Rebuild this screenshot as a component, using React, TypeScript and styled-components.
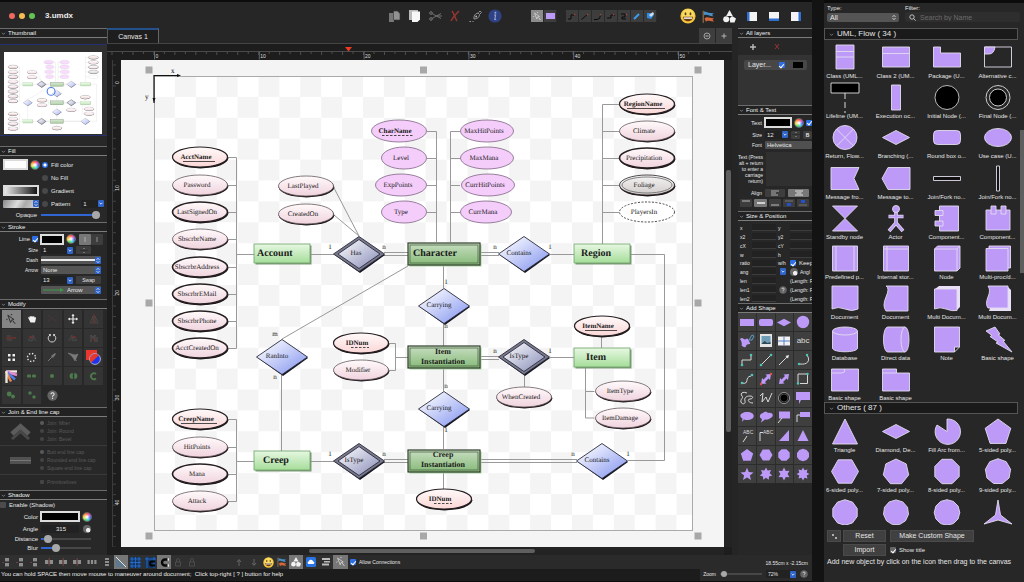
import React from "react";
import styled, { createGlobalStyle, css } from "styled-components";

const SANS = `"Liberation Sans", Inter, sans-serif`;
const SERIF = `"Liberation Serif", serif`;
const PURPLE = "#bd9af8";
const EDGE = "#e2dcec";

const GlobalStyle = createGlobalStyle`
  * { box-sizing: border-box; }
  body { margin: 0; background: #0e0e0e; color: #e6e6e6; font-family: ${SANS}; font-size: 6px; line-height: 8px; }
  button, input, select, textarea { font: inherit; color: inherit; margin: 0; padding: 0; border: 0; background: none; border-radius: 0; }
  svg { display: block; flex: none; }
`;

/* ---------- frame ---------- */
const Desktop = styled.div`
  display: flex;
  gap: 12px;
  height: 100vh;
  overflow: hidden;
  background: #131313;
`;
const AppWindow = styled.main`
  flex: 1;
  min-width: 0;
  display: flex;
  flex-direction: column;
  background: #252525;
  border-top: 2px solid #0c0c0c;
  border-bottom: 1px solid #0c0c0c;
`;
const TitleBar = styled.header`
  display: flex;
  align-items: center;
  height: 26px;
  flex: none;
  padding: 2px 5px 0 9px;
  background: #262626;
`;
const Lights = styled.div`
  display: flex;
  gap: 4px;
`;
const Light = styled.i<{ $c: string }>`
  width: 6px;
  height: 6px;
  border-radius: 50%;
  background: ${(p) => p.$c};
`;
const FileName = styled.h1`
  margin: 0 auto 0 10px;
  font-size: 8px;
  font-weight: 700;
  color: #ececec;
`;
const IconGroup = styled.div<{ $ml?: number }>`
  display: flex;
  align-items: center;
  margin-left: ${(p) => p.$ml ?? 0}px;
`;
const IconButton = styled.button<{ $w?: number }>`
  width: ${(p) => p.$w ?? 20}px;
  height: 18px;
  display: flex;
  align-items: center;
  justify-content: center;
`;
const SegButton = styled.button<{ $on?: boolean }>`
  width: 13px;
  height: 12px;
  display: flex;
  align-items: center;
  justify-content: center;
  background: ${(p) => (p.$on ? "#8c8c8c" : "#3d3d3d")};
  border-right: 1px solid #2a2a2a;
`;
const Workspace = styled.div`
  flex: 1;
  min-height: 0;
  display: flex;
`;
const SidePanel = styled.aside`
  width: 107px;
  flex: none;
  overflow: hidden;
  background: #282828;
  display: flex;
  flex-direction: column;
`;
const Inspector = styled.aside`
  width: 74px;
  flex: none;
  margin-left: 6px;
  overflow: hidden;
  background: #272727;
`;
const SectionHead = styled.h2`
  height: 10px;
  flex: none;
  margin: 0;
  padding-left: 1px;
  display: flex;
  align-items: center;
  gap: 2px;
  font-size: 6px;
  font-weight: 400;
  line-height: 8px;
  color: #f0f0f0;
  background: #222;
  border-top: 1px solid #6c6c6c;
  border-bottom: 1px solid #7c7c7c;
`;
const Body = styled.div<{ $h: number; $pad?: string }>`
  min-height: ${(p) => p.$h}px;
  flex: none;
  padding: ${(p) => p.$pad ?? "1px 0 0"};
`;
const Row = styled.div<{ $h?: number; $gap?: number; $pl?: number }>`
  height: ${(p) => p.$h ?? 10}px;
  display: flex;
  align-items: center;
  gap: ${(p) => p.$gap ?? 3}px;
  padding-left: ${(p) => p.$pl ?? 0}px;
  white-space: nowrap;
`;
const FieldName = styled.label<{ $w: number; $small?: boolean; $left?: boolean }>`
  width: ${(p) => p.$w}px;
  flex: none;
  text-align: ${(p) => (p.$left ? "left" : "right")};
  font-size: ${(p) => (p.$small ? 5 : 6)}px;
`;
const ChoiceLabel = styled.label<{ $dim?: boolean; $small?: boolean }>`
  display: flex;
  align-items: center;
  gap: 3px;
  font-size: ${(p) => (p.$dim || p.$small ? 5 : 6)}px;
  color: ${(p) => (p.$dim ? "#5a5a5a" : "inherit")};
`;
const Radio = styled.input.attrs({ type: "radio" })<{ $dim?: boolean }>`
  appearance: none;
  width: 6px;
  height: 6px;
  flex: none;
  border-radius: 50%;
  background: #484848;
  ${(p) => p.$dim && css`width: 4px; height: 4px; background: #444;`}
  &:checked {
    background: ${(p) => (p.$dim ? "#5a5a5a" : "radial-gradient(#fff 0 1px, #2f6fe4 2px)")};
  }
`;
const Check = styled.input.attrs({ type: "checkbox" })`
  appearance: none;
  width: 6px;
  height: 6px;
  flex: none;
  border-radius: 1px;
  background: #4c4c4c;
  display: grid;
  place-items: center;
  &:checked { background: #2f6fe4; }
  &:checked::after {
    content: "";
    width: 2px;
    height: 4px;
    border: solid #fff;
    border-width: 0 1px 1px 0;
    transform: rotate(40deg);
  }
`;
const GreyCheck = styled(Check)`
  &:checked { background: #666; }
`;
const DimCheck = styled(Check)`
  width: 4px;
  height: 4px;
  background: #444;
`;
const Well = styled.button<{ $w: number; $fill: string; $h?: number }>`
  width: ${(p) => p.$w}px;
  height: ${(p) => p.$h ?? 11}px;
  flex: none;
  border: 2px solid #dcdcdc;
  background: ${(p) => p.$fill};
`;
const Wheel = styled.button`
  width: 10px;
  height: 10px;
  flex: none;
  border: 1px solid #6a6a6a;
  border-radius: 50%;
  background: radial-gradient(#fff 0 8%, transparent 60%),
    conic-gradient(#ff4b3a, #c74bd8, #3d6bff, #2ccfe0, #49d64a, #f4e63a, #ff9a2b, #ff4b3a);
`;
const Combo = styled.div<{ $w: number; $tone?: string; $center?: boolean }>`
  width: ${(p) => p.$w}px;
  height: 8px;
  flex: none;
  display: flex;
  align-items: center;
  border-radius: 1px;
  background: ${(p) => p.$tone ?? "#222"};
  & > input, & > select {
    flex: 1;
    min-width: 0;
    width: 0;
    padding-left: 2px;
    appearance: none;
    line-height: 8px;
    height: 8px;
    text-align: ${(p) => (p.$center ? "center" : "left")};
  }
`;
const StepBtn = styled.button<{ $plain?: boolean }>`
  width: 6px;
  height: 7px;
  flex: none;
  border-radius: 1px;
  background: ${(p) => (p.$plain ? "none" : "#2f64c8")};
`;
const SmallButton = styled.button<{ $w: number; $on?: boolean; $h?: number }>`
  width: ${(p) => p.$w}px;
  height: ${(p) => p.$h ?? 8}px;
  flex: none;
  display: flex;
  align-items: center;
  justify-content: center;
  border-radius: 1px;
  font-size: 5px;
  background: ${(p) => (p.$on ? "#777" : "#3d3d3d")};
`;
const Slider = styled.input.attrs({ type: "range" })<{ $w: number; $v: number; $k?: number }>`
  appearance: none;
  width: ${(p) => p.$w}px;
  height: 8px;
  flex: none;
  background: linear-gradient(to right, #2f66d4 ${(p) => p.$v}%, #474747 ${(p) => p.$v}%) center / 100% 2px no-repeat;
  &::-webkit-slider-thumb {
    appearance: none;
    width: ${(p) => p.$k ?? 8}px;
    height: ${(p) => p.$k ?? 8}px;
    border-radius: 50%;
    background: #a8a8a8;
  }
`;
const ThumbFrame = styled.div`
  margin-top: 6px;
  padding: 7px 5px 3px 4px;
  height: 92px;
  border-top: 1px solid #26306e;
  border-bottom: 1px solid #26306e;
  background: #303030;
  & > svg { width: 100%; height: 82px; background: #fff; }
`;
const ToolGrid = styled.div`
  display: grid;
  grid-template-columns: repeat(5, 1fr);
  grid-auto-rows: 18px;
  gap: 1px 2px;
  padding: 1px 4px 0 2px;
`;
const ToolCell = styled.button<{ $on?: boolean; $bare?: boolean }>`
  display: grid;
  place-items: center;
  background: ${(p) => (p.$on ? "#858585" : p.$bare ? "none" : "#343434")};
`;
const JoinRow = styled.div`
  display: flex;
  align-items: center;
  gap: 9px;
  height: 29px;
  padding-left: 10px;
  border-bottom: 1px solid #3a3a3a;
`;
const ChoiceStack = styled.div`
  display: flex;
  flex-direction: column;
`;
const Spacer = styled.span`
  width: 10px;
  flex: none;
  display: grid;
  place-items: center;
`;
const Knob = styled.i`
  width: 8px;
  height: 8px;
  flex: none;
  border-radius: 50%;
  background: radial-gradient(circle at 65% 65%, #eee 0 25%, #666 35%);
`;

/* ---------- document area ---------- */
const DocColumn = styled.section`
  flex: 1;
  min-width: 0;
  display: flex;
  flex-direction: column;
  background: #1c1c1c;
`;
const TabBar = styled.div`
  height: 16px;
  flex: none;
  display: flex;
  justify-content: space-between;
  align-items: stretch;
  background: #262626;
  border-bottom: 1px solid #444;
`;
const Tab = styled.button`
  width: 52px;
  font-size: 7px;
  color: #e6e6e6;
  background: #1e1e1e;
  border-top: 2px solid #24508c;
  border-right: 1px solid #666;
  border-left: 1px solid #555;
`;
const TabTools = styled.div`
  display: flex;
  gap: 1px;
  & > button { width: 16px; display: grid; place-items: center; background: #3e3e3e; }
`;
const DocGrid = styled.div`
  flex: 1;
  min-height: 0;
  display: grid;
  grid-template-columns: 14px 1fr 8px;
  grid-template-rows: 16px 1fr 8px;
`;
const Ruler = styled.div<{ $span?: boolean }>`
  overflow: hidden;
  background: #1d1d1d;
  ${(p) => p.$span && css`grid-column: 1 / -1;`}
`;
const CanvasArea = styled.div`
  overflow: hidden;
  background: #f4f4f4;
`;
const Track = styled.div<{ $side?: boolean }>`
  display: flex;
  background: #232323;
  ${(p) => (p.$side ? css`flex-direction: column; padding: 110px 1px 0 2px;` : css`padding: 2px 0 0 188px;`)}
  & > i {
    ${(p) => (p.$side ? css`height: 262px; width: 5px;` : css`width: 226px; height: 4px;`)}
    border-radius: 2px;
    background: #5f5f5f;
  }
`;

/* ---------- bottom ---------- */
const Footer = styled.footer`
  height: 26px;
  flex: none;
  display: flex;
  justify-content: space-between;
  background: #2a2a2a;
`;
const FooterLeft = styled.div`
  flex: 1;
  display: flex;
  flex-direction: column;
`;
const ToolStrip = styled.div`
  display: flex;
  align-items: center;
  height: 14px;
`;
const StripButton = styled.button<{ $on?: boolean; $w?: number }>`
  width: ${(p) => p.$w ?? 14}px;
  height: 14px;
  display: grid;
  place-items: center;
  background: ${(p) => (p.$on ? "#777" : "#303030")};
`;
const StatusLine = styled.p`
  flex: 1;
  margin: 0;
  padding: 1px 0 0 1px;
  line-height: 8px;
  background: #1c1c1c;
  color: #ececec;
  white-space: pre;
`;
const FooterRight = styled.div`
  width: 112px;
  padding: 4px 4px 0 0;
  display: flex;
  flex-direction: column;
  align-items: flex-end;
  gap: 2px;
  font-size: 5px;
`;

/* ---------- inspector ---------- */
const LayerList = styled.div`
  height: 50px;
  background: #333;
  padding: 5px 5px 0 6px;
`;
const LayerRow = styled.div`
  display: flex;
  align-items: center;
  gap: 8px;
  height: 10px;
  padding: 0 4px;
  border-radius: 2px;
  font-size: 7px;
  background: #474747;
`;
const Swatch = styled.i`
  width: 13px;
  height: 6px;
  background: #000;
`;
const TextNote = styled.label`
  width: 25px;
  flex: none;
  font-size: 5px;
  line-height: 6px;
  text-align: right;
  white-space: normal;
`;
const TextBox = styled.textarea`
  flex: 1;
  min-width: 0;
  height: 34px;
  resize: none;
  background: #303030;
`;
const NumField = styled.input`
  width: 24px;
  height: 7px;
  flex: none;
  background: #222;
  border-bottom: 1px solid #3c3c3c;
`;
const ShapeGrid = styled.div`
  display: grid;
  grid-template-columns: repeat(4, 1fr);
  grid-auto-rows: 18px;
  gap: 1px 1px;
  background: #2c2c2c;
  & > button { display: grid; place-items: center; background: #3f3f3f; font-size: 8px; color: #ddd; }
`;

/* ---------- palette ---------- */
const Palette = styled.aside`
  width: 200px;
  flex: none;
  display: flex;
  flex-direction: column;
  border-top: 3px solid #0c0c0c;
  background: #272727;
`;
const FilterBar = styled.div`
  display: flex;
  gap: 6px;
  padding: 1px 4px 6px 3px;
`;
const FilterField = styled.div<{ $grow?: boolean }>`
  flex: ${(p) => (p.$grow ? "1" : "none")};
  ${(p) => !p.$grow && css`width: 72px;`}
  min-width: 0;
  display: flex;
  flex-direction: column;
`;
const Picker = styled.div`
  height: 9px;
  margin-top: 1px;
  display: flex;
  align-items: center;
  border-radius: 2px;
  background: #555;
  padding-right: 2px;
  & > select { flex: 1; min-width: 0; appearance: none; padding-left: 3px; font-size: 7px; line-height: 9px; height: 9px; }
`;
const Search = styled.div`
  height: 10px;
  display: flex;
  align-items: center;
  gap: 4px;
  padding-left: 4px;
  border-radius: 2px;
  background: #2e2e2e;
  & > input { flex: 1; min-width: 0; font-size: 7px; height: 10px; }
  & > input::placeholder { color: #6c6c6c; }
`;
const ScrollArea = styled.div`
  flex: 1;
  min-height: 0;
  display: flex;
  justify-content: space-between;
  overflow: hidden;
`;
const Groups = styled.div`
  width: 194px;
`;
const GroupHead = styled.h2`
  height: 12px;
  margin: 0;
  padding-left: 4px;
  display: flex;
  align-items: center;
  gap: 3px;
  font-size: 8px;
  font-weight: 400;
  line-height: 10px;
  background: #1a1a1a;
  border: 1px solid #555;
`;
const TileGrid = styled.div<{ $h: number }>`
  display: grid;
  grid-template-columns: repeat(4, 51px);
  grid-auto-rows: 1fr;
  min-height: ${(p) => p.$h}px;
  margin-left: -5px;
`;
const Tile = styled.button`
  display: flex;
  flex-direction: column;
  align-items: center;
  justify-content: flex-start;
  padding-top: 3px;
  gap: 1px;
  line-height: 7px;
  white-space: nowrap;
`;
const Thumb = styled.i`
  width: 4px;
  height: 143px;
  margin-top: 102px;
  background: #5e5e5e;
`;
const PaletteFoot = styled.div`
  display: grid;
  grid-template-columns: 14px 43px 1fr;
  gap: 2px;
  padding: 5px 3px 0 3px;
  height: 57px;
  grid-template-rows: 12px 12px 8px;
`;
const PushButton = styled.button<{ $w?: number }>`
  width: ${(p) => (p.$w ? p.$w + "px" : "100%")};
  height: 12px;
  font-size: 7px;
  background: #404040;
  border: 1px solid #4a4a4a;
  display: grid;
  place-items: center;
`;
const FootCell = styled.div`
  display: flex;
  align-items: center;
  padding-left: 2px;
`;
const FootLine = styled.p`
  grid-column: 1 / -1;
  margin: 0;
  font-size: 7px;
  line-height: 8px;
  white-space: nowrap;
`;

/* ---------- small drawings ---------- */
const Chevron = () => (
  <svg width="5" height="5" viewBox="0 0 5 5"><path d="M1 1.8 2.5 3.4 4 1.8" fill="none" stroke="#999" strokeWidth=".7" /></svg>
);
const Head = ({ children }: { children: React.ReactNode }) => (
  <SectionHead><Chevron />{children}</SectionHead>
);
const UpDown = ({ plain }: { plain?: boolean }) => (
  <StepBtn as="span" $plain={plain}>
    <svg width="6" height="7" viewBox="0 0 6 7"><path d="M1.6 2.8 3 1.4l1.4 1.4M1.6 4.2 3 5.6l1.4-1.4" fill="none" stroke="#fff" strokeWidth=".8" /></svg>
  </StepBtn>
);
const DownBtn = ({ label }: { label: string }) => (
  <StepBtn aria-label={label}>
    <svg width="6" height="7" viewBox="0 0 6 7"><path d="M1.6 2.8 3 4.2l1.4-1.4" fill="none" stroke="#fff" strokeWidth=".8" /></svg>
  </StepBtn>
);
const StepPair = () => (
  <svg width="8" height="7" viewBox="0 0 8 7"><path d="M3 2 4 1l1 1M3 5l1 1 1-1" fill="none" stroke="#888" strokeWidth=".7" /><path d="M0 3.500h8" stroke="#2a2a2a" strokeWidth=".8" /></svg>
);
const Smiley = ({ s }: { s: number }) => (
  <svg width={s} height={s} viewBox="0 0 16 16">
    <circle cx="8" cy="8" r="7.6" fill="#f5c63c" />
    <circle cx="8" cy="7" r="6" fill="#fadb62" />
    <ellipse cx="5.5" cy="5.8" rx=".9" ry="1.5" fill="#5b3a12" /><ellipse cx="10.5" cy="5.8" rx=".9" ry="1.5" fill="#5b3a12" />
    <path d="M3 8.8h10c0 6-10 6-10 0z" fill="#6b3c12" /><path d="M3.8 9.4h8.4v1.4H3.8z" fill="#fff" />
  </svg>
);
const Flags = ({ s }: { s: number }) => (
  <svg width={s} height={s} viewBox="0 0 13 13">
    <path d="M1.2.8v12" stroke="#a08256" strokeWidth="1" />
    <path d="M2 1.500c3 0 4 2 7 1.500l3 .5-2 1.200 1.500 1.500C7 6.500 6 3.600 2 5.200z" fill="#4a90c8" />
    <path d="M2.500 8.400C5 5.800 7 8 12 8.200l-1.500 1.200 1.500 2C7 11.600 6 9.600 4 12z" fill="#d3663a" />
  </svg>
);
const Shapes = ({ s }: { s: number }) => (
  <svg width={s} height={s} viewBox="0 0 13 13" fill="#f2f2f2">
    <path d="M6.500 0 9.800 6h-6.600z" /><circle cx="3.200" cy="9.300" r="3" /><path d="m9 6 4 2.600-1.500 3.800H7.200L6.600 8.400z" />
  </svg>
);
const Cursor = ({ s = 9, c = "#ddd" }: { s?: number; c?: string }) => (
  <svg width={s} height={s} viewBox="0 0 9 9"><path d="m1.500 1 5 3.500-2 .5L3.800 7z" fill="none" stroke={c} strokeWidth=".7" /><path d="m5.500 5.500 2 2.500M1 4l-.5 1M4 .5h1" stroke={c} strokeWidth=".8" /></svg>
);
const WindowIcon = ({ side }: { side: "l" | "b" | "r" }) => (
  <svg width="10" height="9" viewBox="0 0 10 9">
    <path d="M0 0h10v9H0z" fill="#f4f4f4" />
    {side === "l" && <path d="M0 0h2.500v9H0z" fill="#2f6fd0" />}
    {side === "b" && <path d="M0 6.500h10V9H0z" fill="#2f6fd0" />}
    {side === "r" && <path d="M7.500 0H10v9H7.500z" fill="#2f6fd0" />}
  </svg>
);
const Connector = ({ d, blue }: { d: string; blue?: boolean }) => (
  <svg width="10" height="9" viewBox="0 0 10 9" fill="none">
    <path d={d} stroke={blue ? "#3b9cf0" : "#0b0b0b"} strokeWidth={blue ? 2 : 1} />
    {!blue && <circle cx="7.600" cy="2.600" r=".8" fill="#a8483c" />}
  </svg>
);
const QMark = ({ s }: { s: number }) => (
  <svg width={s} height={s} viewBox="0 0 12 12">
    <circle cx="6" cy="6" r="5.600" fill="#636363" />
    <path d="M4.300 4.600c0-2.200 3.500-2.200 3.500 0C7.800 6 6 5.800 6 7.300" fill="none" stroke="#eee" strokeWidth="1.100" /><circle cx="6" cy="9" r=".7" fill="#eee" />
  </svg>
);

/* ---------- ER diagram ---------- */
type Kind = "thin" | "mid" | "thick" | "double" | "dash" | "pink";
type Attr = [string, number, number, Kind, number?];
const attrs: Attr[] = [
  ["AcctName", 200, 157, "mid"], ["Password", 200, 185, "thin"], ["LastSignedOn", 200, 212, "thick"],
  ["SbscrbrName", 200, 239, "thin"], ["SbscrbrAddress", 200, 267, "thick"], ["SbscrbrEMail", 200, 294, "thick"],
  ["SbscrbrPhone", 200, 321, "thick"], ["AcctCreatedOn", 200, 348, "thick"],
  ["CreepName", 200, 419, "mid"], ["HitPoints", 200, 447, "thin"], ["Mana", 200, 474, "thick"], ["Attack", 200, 501, "thin"],
  ["LastPlayed", 306, 186, "thin"], ["CreatedOn", 306, 214, "thin"],
  ["CharName", 399, 131, "pink", 28], ["Level", 404, 158, "pink", 23], ["ExpPoints", 401, 185, "pink", 26], ["Type", 404, 212, "pink", 23],
  ["MaxHitPoints", 487, 131, "pink", 27], ["MaxMana", 487, 158, "pink", 27], ["CurrHitPoints", 488, 185, "pink", 27], ["CurrMana", 486, 212, "pink", 26],
  ["RegionName", 647, 104, "mid"], ["Climate", 647, 131, "thin"], ["Precipitation", 647, 158, "thick"], ["Foliage", 647, 185, "double"], ["PlayersIn", 647, 212, "dash"],
  ["IDNum", 361, 343, "mid"], ["Modifier", 361, 370, "thin"], ["WhenCreated", 524, 397, "thin"],
  ["ItemName", 602, 326, "mid"], ["ItemType", 623, 391, "thin"], ["ItemDamage", 623, 418, "thin"], ["IDNum", 444, 499, "mid"],
];
const dashedKeys = ["IDNum", "CharName"];
const keys: Record<string, number> = { AcctName: 17, CreepName: 19, RegionName: 20, ItemName: 17, IDNum: 10, CharName: 17 };
const rels: [string, number, number, boolean][] = [
  ["Has", 359, 254, true], ["Contains", 524, 254, false], ["Carrying", 444, 306, false], ["RanInto", 282, 357, false],
  ["IsType", 524, 357, true], ["Carrying", 444, 409, false], ["IsType", 359, 461, true], ["Contains", 602, 461, false],
];
const cards: [string, number, number][] = [
  ["1", 330, 249], ["n", 384, 249], ["n", 495, 249], ["1", 550, 249], ["1", 446, 284], ["n", 446, 328], ["m", 275, 336], ["n", 275, 379],
  ["n", 446, 388], ["1", 446, 432], ["n", 495, 353], ["1", 550, 353], ["1", 330, 456], ["n", 384, 456], ["n", 573, 456], ["1", 628, 456],
];
const wires = [
  "M228 157.500h8.500v191h-8.500M228 185.500h8.500M228 212.500h8.500M228 239.500h8.500M228 267.500h8.500M228 294.500h8.500M228 321.500h8.500M236 254.500h18",
  "M228 419.500h8.500v82h-8.500M228 447.500h8.500M228 474.500h8.500M236 461.500h18",
  "M334 188 359 236M334 215l25 21M310 254.500h24M384 252.500h24M384 255.500h24M480 252.500h19M480 255.500h19M550 254.500h24",
  "M427 131.500h9.500V242M427 158.500h9.500M427 185.500h9.500M427 212.500h9.500M460 131.500h-9.500V242M460 158.500h-9.500M460 185.500h-9.500M460 212.500h-9.500",
  "M619 104.500h-16.500V244M619 131.500h-16.500M619 158.500h-16.500M619 185.500h-16.500M619 212.500h-16.500",
  "M630 254.500h34.500v206H628M408 266 282 339M281.500 375v76M443.500 265v23M443.500 324v22M443.500 369v22M443.500 427v22M443.500 472v17",
  "M389 343.500h6.500v27H389M395 357.500h13M480 356.500h19M480 359.500h19M550 357.500h24M524.500 375v12M601.500 336v12M585.500 367v51h9M585.500 391.500h9",
  "M310 461.500h24M384 459.500h24M384 462.500h24M480 459.500h97M480 462.500h97",
];
const Entity = ({ x, y, w, h, dark }: { x: number; y: number; w: number; h: number; dark?: boolean }) => (
  <g>
    <rect x={x + 1.500} y={y + 1.500} width={w} height={h} fill={dark ? "#a9cfa0" : "#7d9a78"} />
    <rect x={x} y={y} width={w} height={h} fill={dark ? "url(#gDark)" : "url(#gGreen)"} stroke={dark ? "#33402f" : "#6ca166"} strokeWidth={dark ? 1.2 : 0.8} />
    {dark && <rect x={x + 2} y={y + 2} width={w - 4} height={h - 4} fill="none" stroke="#4d6646" strokeWidth=".8" />}
  </g>
);
const Diagram = ({ text = true }: { text?: boolean }) => (
  <g fontFamily={SERIF} fontSize="7" fill="#1a1a1a" textRendering="geometricPrecision">
    <defs>
      <linearGradient id="gRose" x1="0" y1="0" x2="0" y2="1"><stop offset="0" stopColor="#fffafa" /><stop offset="1" stopColor="#f0d3de" /></linearGradient>
      <linearGradient id="gKey" x1="0" y1="0" x2="0" y2="1"><stop offset="0" stopColor="#fffafa" /><stop offset="1" stopColor="#fbd6d6" /></linearGradient>
      <linearGradient id="gGrey" x1="0" y1="0" x2="0" y2="1"><stop offset="0" stopColor="#f5f3f3" /><stop offset="1" stopColor="#d2cccc" /></linearGradient>
      <linearGradient id="gGreen" x1="0" y1="0" x2="0" y2="1"><stop offset="0" stopColor="#e6f8e2" /><stop offset="1" stopColor="#a6dd9a" /></linearGradient>
      <linearGradient id="gDark" x1="0" y1="0" x2="0" y2="1"><stop offset="0" stopColor="#c8dec2" /><stop offset="1" stopColor="#86ba78" /></linearGradient>
      <linearGradient id="gBlue" x1="0" y1="0" x2="1" y2="1"><stop offset=".2" stopColor="#eceffd" /><stop offset=".9" stopColor="#8c9cf0" /></linearGradient>
      <linearGradient id="gSlate" x1="0" y1="0" x2="1" y2="1"><stop offset=".2" stopColor="#e8e8f2" /><stop offset=".9" stopColor="#9298bd" /></linearGradient>
    </defs>
    {wires.map((d) => <path key={d} d={d} fill="none" stroke="#999" strokeWidth="1" />)}
    {attrs.map(([n, x, y, k, rx = 28]) => (
      <g key={n + x + y}>
        {(k === "thin" || k === "mid" || k === "thick" || k === "double") && <ellipse cx={x + 0.5} cy={y + 1.2} rx={rx - 0.2} ry="10.200" fill="#1c1418" />}
        <ellipse cx={x} cy={y} rx={rx - 0.5} ry={k === "pink" ? 11 : 10}
          fill={k === "pink" ? "#f5cdfb" : k === "dash" ? "#fff" : k === "double" ? "url(#gGrey)" : k === "mid" ? "url(#gKey)" : "url(#gRose)"}
          stroke={k === "pink" ? "#7d6683" : k === "thin" ? "#665a5f" : "#262022"}
          strokeWidth={k === "thick" ? 1.6 : k === "mid" ? 1.2 : 0.8}
          strokeDasharray={k === "dash" ? "2 1.500" : undefined} />
        {k === "double" && <ellipse cx={x} cy={y} rx="25" ry="8" fill="none" stroke="#666" strokeWidth=".8" />}
        {text && (
          <text x={x - (keys[n] ? 4 : 3)} y={y + 2} textAnchor="middle" fontWeight={keys[n] ? 700 : 400}>{n}</text>
        )}
        {keys[n] && <path d={`M${x - keys[n]} ${y + 4.500}h${keys[n] * 2 - 2}`} stroke="#222" strokeWidth=".8" strokeDasharray={dashedKeys.includes(n) ? "2.500 1.500" : undefined} />}
      </g>
    ))}
    <Entity x={254} y={244} w={56} h={19} /><Entity x={574} y={244} w={56} h={19} />
    <Entity x={574} y={348} w={56} h={19} /><Entity x={254} y={451} w={56} h={19} />
    <Entity x={408} y={243} w={72} h={22} dark /><Entity x={408} y={346} w={72} h={22} dark /><Entity x={408} y={450} w={72} h={22} dark />
    {rels.map(([n, x, y, dbl]) => (
      <g key={n + x + y}>
        <path d={`M${x + 1} ${y - 16}l25 17-25 18-25-18z`} fill="#15151f" />
        <path d={`M${x} ${y - 17.500}l25.500 17.500-25.500 17.500-25.500-17.500z`} fill={dbl ? "#77788a" : "url(#gBlue)"} stroke="#2b2b3c" strokeWidth=".9" />
        {dbl && <path d={`M${x} ${y - 14.500}l21 14.500-21 14.500-21-14.500z`} fill="url(#gSlate)" stroke="#2b2b3c" strokeWidth=".9" />}
        {text && <text x={x - (n === "Has" ? 3 : 5)} y={y + 1} textAnchor="middle">{n}</text>}
      </g>
    ))}
    {text && (
      <g>
        {cards.map(([t, x, y]) => <text key={t + x + y} x={x} y={y} textAnchor="middle">{t}</text>)}
        <g fontWeight="700" fontSize="10">
          <text x="257" y="256">Account</text><text x="413" y="256">Character</text><text x="581" y="256">Region</text>
          <text x="586" y="360">Item</text><text x="263" y="463">Creep</text>
        </g>
        <g fontWeight="700" fontSize="8" textAnchor="middle">
          <text x="443" y="354">Item</text><text x="443" y="364">Instantiation</text>
          <text x="443" y="457">Creep</text><text x="443" y="467">Instantiation</text>
        </g>
      </g>
    )}
  </g>
);
const CanvasDrawing = () => (
  <svg width="100%" height="100%" role="img" aria-label="Entity relationship diagram">
    <defs>
      <pattern id="checker" x="154" y="76" width="41.800" height="41.800" patternUnits="userSpaceOnUse">
        <path d="M0 0h41.800v41.800H0z" fill="#fff" /><path d="M20.900 0h20.900v20.900H20.900zM0 20.900h20.900v20.900H0z" fill="#f4f4f4" />
      </pattern>
    </defs>
    <g transform="translate(-121 -60)">
      <rect x="154.500" y="76.500" width="538" height="454" fill="url(#checker)" stroke="#aaa" />
      {[70, 303, 536].flatMap((y) => [149, 423.500, 698].map((x) => (x === 423.500 && y === 303 ? null : <rect key={x + "-" + y} x={x - 3.500} y={y - 3.500} width="7" height="7" fill="#a8a8a8" />)))}
      <path d="M154 103V75.500h25M154 75.500v24" fill="none" stroke="#111" strokeWidth="1.200" />
      <path d="m177 74 4 1.500-4 1.500zM152.500 98l1.500 4 1.500-4z" fill="#111" />
      <g fontSize="7" fontFamily={SERIF} textRendering="geometricPrecision"><text x="171" y="73">x</text><text x="145" y="99">y</text></g>
      <Diagram />
    </g>
  </svg>
);
const steps = (n: number) => Array.from({ length: n }, (_, i) => i);
const TopRuler = () => (
  <svg width="100%" height="16">
    <path d="M0 7.500H3000" stroke="#4a4a4a" />
    {steps(58).map((i) => <path key={i} d={`M${5 + i * 10.48} 8v${i % 2 ? 2 : 3}`} stroke="#5c5c5c" strokeWidth=".8" />)}
    {steps(6).map((i) => <path key={"m" + i} d={`M${47.5 + i * 104.8} 7.500v8`} stroke="#777" strokeWidth=".8" />)}
    {steps(6).map((i) => <text key={"t" + i} x={48.5 + i * 104.8} y="14" fontSize="5" fill="#ddd">{i * 10}</text>)}
    <path d="M238 3h7l-3.500 4.500z" fill="#ee3a22" />
  </svg>
);
const SideRuler = () => (
  <svg width="14" height="100%">
    <path d="M5.500 0V2000" stroke="#3c3c3c" />
    {steps(47).map((i) => <path key={i} d={`M6 ${5 + i * 10.48}h3`} stroke="#4c4c4c" strokeWidth=".8" />)}
    {steps(5).map((i) => <text key={i} transform={`translate(12 ${(i ? 22 : 20) + i * 104.8 + 4}) rotate(-90)`} fontSize="5" fill="#ddd">{i * 10}</text>)}
  </svg>
);

/* ---------- modify tools ---------- */
const modifyTools: [string, React.ReactNode][] = [
  ["Select", <Cursor key="i" s={11} c="#222" />],
  ["Pan", <svg key="i" width="10" height="10" viewBox="0 0 10 10"><path d="M1 3.500c1-.8 1.400.2 1.700.7C2 1.600 3.600 1.400 4 3c.2-1.400 1.700-1.400 1.800 0 .6-1.200 1.800-.8 1.700.5.800-.8 1.700-.2 1.500.8L8 8.500H3.500z" fill="#f2f2f2" /></svg>],
  ["Cut path", <svg key="i" width="11" height="10" viewBox="0 0 11 10"><path d="m1 1 9 7M1 8l3-3M8 2l2-1" stroke="#4a3636" fill="none" /></svg>],
  ["Move", <svg key="i" width="10" height="10" viewBox="0 0 10 10"><path d="M5 .5v9M.5 5h9" stroke="#e8e8e8" strokeWidth="1.200" /><path d="M3.400 2 5 0l1.600 2zM3.400 8 5 10l1.600-2zM2 3.400 0 5l2 1.600zM8 3.400 10 5 8 6.600z" fill="#e8e8e8" /></svg>],
  ["Flip horizontal", <svg key="i" width="10" height="10" viewBox="0 0 10 10"><path d="M1 9 4 2v7zM9 9 6 2v7z" fill="none" stroke="#4c4c4c" strokeWidth=".8" /><path d="M5 0v10" stroke="#8a302b" strokeWidth=".8" /></svg>],
  ["Flip vertical", <svg key="i" width="10" height="10" viewBox="0 0 10 10"><path d="M1 3h4M1 7h5" stroke="#4c4c4c" /><path d="M0 5h10" stroke="#8a302b" /></svg>],
  ["Rotate left", <svg key="i" width="10" height="10" viewBox="0 0 10 10"><path d="m1 7 4-3v4zM6 8V2l3 6" fill="none" stroke="#4c4c4c" strokeWidth=".8" /><path d="M2 4h4" stroke="#8a302b" /></svg>],
  ["Rotate", <svg key="i" width="10" height="10" viewBox="0 0 10 10"><path d="M3 2a3.800 3.800 0 1 0 4 0" fill="none" stroke="#d0d0d0" /><path d="M1.500 1h2.400v2.400zM8.500 1H6.100v2.400z" fill="#d0d0d0" /></svg>],
  ["Rotate right", <svg key="i" width="10" height="10" viewBox="0 0 10 10"><path d="m9 7-4-3v4zM4 8V2L1 8" fill="none" stroke="#4c4c4c" strokeWidth=".8" /><path d="M4 4h4" stroke="#8a302b" /></svg>],
  ["Skew", <svg key="i" width="10" height="10" viewBox="0 0 10 10"><path d="M2 9V2l2 3 2-3v7M8 4v5" fill="none" stroke="#555" strokeWidth=".9" /><path d="m4 5 2 3" stroke="#8a302b" /></svg>],
  ["Grid array", <svg key="i" width="9" height="9" viewBox="0 0 9 9" fill="#f0f0f0"><path d="M1 1h2.500v2.500H1zM5.500 1H8v2.500H5.500zM1 5.500h2.500V8H1zM5.500 5.500H8V8H5.500z" /></svg>],
  ["Circular array", <svg key="i" width="11" height="11" viewBox="0 0 11 11"><circle cx="5.500" cy="5.500" r="4" fill="none" stroke="#e8e8e8" strokeWidth="1.400" strokeDasharray="1.400 1.740" /></svg>],
  ["Dropper", <svg key="i" width="10" height="10" viewBox="0 0 10 10"><path d="m1 9 4-4" stroke="#777" /><path d="m4 4 2 2 3-4-1-1z" fill="#777" /></svg>],
  ["Paste style", <svg key="i" width="11" height="10" viewBox="0 0 11 10"><path d="m0 1 7 2-2 2zM4 4l6-2-3 7zM6 6l3 3" fill="#7a7a7a" stroke="#7a7a7a" strokeWidth=".6" /></svg>],
  ["Colors", <svg key="i" width="15" height="15" viewBox="0 0 15 15"><path d="M0 0h11v10H0z" fill="#e8372c" /><circle cx="9" cy="9" r="5.400" fill="#1e35ec" stroke="#c9c9dd" strokeWidth=".8" /><path d="M5.200 12.800A5.400 5.400 0 0 1 12.800 5.200z" fill="#e8372c" /></svg>],
  ["Palette", <svg key="i" width="13" height="13" viewBox="0 0 13 13" fill="none" strokeWidth="2.400"><path d="M1 1.500h11" stroke="#f2e6e2" /><path d="m1 1.500 11 3.500" stroke="#e58bd0" /><path d="m1 1.500 9 8" stroke="#4f7df0" /><path d="m1 1.500 5 10" stroke="#ee8a44" /><path d="M1.500 1v12" stroke="#e8e4da" /></svg>],
  ["Union", <svg key="i" width="11" height="10" viewBox="0 0 11 10" fill="#4d7a4b"><rect x="1" y="3.500" width="4" height="3" rx="1" /><rect x="6" y="3.500" width="4" height="3" rx="1" /></svg>],
  ["Intersect", <svg key="i" width="10" height="10" viewBox="0 0 10 10"><circle cx="5" cy="5" r="2" fill="#4d7a4b" /></svg>],
  ["Exclude", <svg key="i" width="11" height="10" viewBox="0 0 11 10" fill="#4d7a4b"><path d="M4.800 2v6a3.200 3 0 0 1 0-6zM6.200 2v6a3.200 3 0 0 0 0-6z" /></svg>],
  ["Subtract", <svg key="i" width="10" height="10" viewBox="0 0 10 10"><path d="M7 3a3 3 0 1 0 0 4.500" fill="none" stroke="#4d7a4b" strokeWidth="1.800" /></svg>],
  ["Group", <svg key="i" width="10" height="10" viewBox="0 0 10 10" fill="#4d7a4b"><circle cx="3.200" cy="4" r="2.400" /><circle cx="7" cy="6.500" r="2" /></svg>],
  ["Ungroup", <svg key="i" width="10" height="10" viewBox="0 0 10 10" fill="#4d7a4b"><circle cx="3" cy="3" r="1.700" /><circle cx="7" cy="7" r="1.700" /></svg>],
  ["Help", <QMark key="i" s={11} />],
];

/* ---------- inspector shapes ---------- */
const poly = (n: number, cx: number, cy: number, r: number, rot = -90) =>
  steps(n).map((i) => { const a = ((rot + (360 / n) * i) * Math.PI) / 180; return `${(cx + r * Math.cos(a)).toFixed(1)},${(cy + r * Math.sin(a)).toFixed(1)}`; }).join(" ");
const star = (n: number, cx: number, cy: number, r: number, r2: number) =>
  steps(n * 2).map((i) => { const a = ((-90 + (180 / n) * i) * Math.PI) / 180; const q = i % 2 ? r2 : r; return `${(cx + q * Math.cos(a)).toFixed(1)},${(cy + q * Math.sin(a)).toFixed(1)}`; }).join(" ");
const P = { fill: PURPLE };
const L = { fill: "none", stroke: "#d8d8d8", strokeWidth: 1 };
const D = { fill: "#4fc4b8" };
const addShapes: [string, React.ReactNode][] = [
  ["Rectangle", <rect key="s" x="1" y="5" width="14" height="7" {...P} />],
  ["Round box", <rect key="s" x="1" y="5" width="14" height="7" rx="2" {...P} />],
  ["Diamond", <path key="s" d="m1 8.500 7-3.800 7 3.800-7 3.800z" {...P} />],
  ["Circle", <circle key="s" cx="8" cy="8" r="6.200" {...P} />],
  ["Free shape", <g key="s"><path d="M1 6c3-3 4 2 6 0s3 2 4 4-3 0-4 3-3 0-4 0 1-3-2-7z" {...P} /><path d="m10 7 3-5 2 1-2 4z" fill="none" stroke="#5b9dc6" /></g>],
  ["Picture", <g key="s"><path d="M2 1h12v13H2z" fill="#e4e4e4" /><path d="M3.500 3h9v8h-9z" fill="#6f9db8" /><path d="m3.500 11 3-3 3 2 3-1v2z" fill="#2f4654" /></g>],
  ["Table", <g key="s"><path d="M2 3.500h12v9H2z" fill="#f0f0f0" /><path d="M8 3.500v9M2 8h12" stroke="#5580c8" /></g>],
  ["Text", null],
  ["Elbow connector", <g key="s"><path d="M3 13V8h9V3" {...L} /><circle cx="3" cy="13" r="1.300" {...D} /><circle cx="12" cy="3" r="1.300" {...D} /></g>],
  ["Line connector", <g key="s"><path d="M3 13 13 3" {...L} /><circle cx="3" cy="13" r="1.300" {...D} /><circle cx="13" cy="3" r="1.300" {...D} /></g>],
  ["Arrow", <g key="s"><path d="M3 13 12 4" {...L} /><path d="m13 3-1 3.500L9.500 4z" fill="#eee" /></g>],
  ["Arc connector", <g key="s"><path d="M12 3c4 6 0 10-7 9" {...L} /><circle cx="12" cy="3" r="1.200" {...D} /><circle cx="4" cy="12" r="1.200" {...D} /></g>],
  ["Curve connector", <g key="s"><path d="M3 12c8 2 2-6 9-7" {...L} /><circle cx="3" cy="12" r="1.300" {...D} /><circle cx="13" cy="4" r="1.300" {...D} /></g>],
  ["Block arrow connector", <g key="s"><path d="m3 13 1-6 1.500 1.500L9 5 7.500 3.500 13 3l-1 6-1.500-1.500L7 11l1.500 1.500z" {...P} /><circle cx="3" cy="13" r="1.200" fill="#e05050" /><circle cx="13" cy="3" r="1.200" fill="#e05050" /></g>],
  ["Block arrow", <path key="s" d="m3 13 1-6 1.500 1.500L9 5 7.500 3.500 13 3l-1 6-1.500-1.500L7 11l1.500 1.500z" {...P} />],
  ["Frame connector", <g key="s"><path d="M3 3h9.500v9.500H5M3 3v9" {...L} /><circle cx="12.500" cy="3" r="1.200" {...D} /><circle cx="3" cy="12.500" r="1.200" {...D} /></g>],
  ["Free line", <path key="s" d="M8 3C3 1 1 4 3 6s-2 3-1 6 5 2 4-1 1-5 5-5 3 3 0 3-2 4 3 4" {...L} />],
  ["Zigzag", <path key="s" d="m2 6 3-3-1 9 4-5 2 5 4-9" {...L} strokeLinejoin="round" />],
  ["Node", <g key="s"><circle cx="8" cy="8" r="5.500" fill="#050505" stroke="#b5b5b5" strokeWidth=".8" /><circle cx="8" cy="8" r="4" fill="#000" stroke="#777" strokeWidth=".6" /></g>],
  ["Callout", <path key="s" d="M1 2h14v8H6l-2 4V10H1z" {...P} />],
  ["Oval callout", <path key="s" d="M8 3c9 0 9 8 0 8-1 0-2 0-3-.5L3 13l.5-3.500C-1 7 2 3 8 3z" {...P} />],
  ["Cloud callout", <path key="s" d="M5 4c2-2 4-1 5 0 4-1 6 2 4 4s-5 3-7 2.500L3 13.500l1-3.500C1 9 1 5 5 4z" {...P} />],
  ["Line callout", <g key="s"><path d="M3 2.500h11v7H3z" {...P} /><path d="m6 9-4 5" {...L} /></g>],
  ["Elbow callout", <g key="s"><path d="M5 3h10v5H5z" {...P} /><path d="M5 6H2v7" {...L} /></g>],
  ["Line label", <g key="s"><text x="4" y="6" fontSize="5" fill="#d8d8d8">ABC</text><path d="m8 8-4 6" {...L} /></g>],
  ["Elbow label", <g key="s"><text x="5" y="6" fontSize="5" fill="#d8d8d8">ABC</text><path d="M5 4.500H2V13" {...L} /></g>],
  ["Right triangle", <path key="s" d="M3 13 13 2v11z" {...P} />],
  ["Triangle", <path key="s" d="M2.500 13 8 2l5.500 11z" {...P} />],
  ["Pentagon", <polygon key="s" points={poly(5, 8, 8.5, 6.5)} {...P} />],
  ["Hexagon", <polygon key="s" points={poly(6, 8, 8, 6.5, 0)} {...P} />],
  ["Octagon", <polygon key="s" points={poly(8, 8, 8, 6.2, 22.5)} {...P} />],
  ["Decagon", <polygon key="s" points={poly(10, 8, 8, 6.3)} {...P} />],
  ["Star 5", <polygon key="s" points={star(5, 8, 8.5, 6.8, 3)} {...P} />],
  ["Star 7", <polygon key="s" points={star(7, 8, 8, 6.4, 3.8)} {...P} />],
  ["Star 6", <polygon key="s" points={star(6, 8, 8, 6.4, 3.6)} {...P} />],
  ["Star 8", <polygon key="s" points={star(8, 8, 8, 6.4, 4)} {...P} />],
];

/* ---------- palette shapes ---------- */
const S = { fill: PURPLE, stroke: EDGE, strokeWidth: 0.9 };
const N = { fill: "none", stroke: EDGE, strokeWidth: 0.9 };
const flow: [string, React.ReactNode][] = [
  ["Class (UML...", <g key="s"><path d="M6 2h18v24H6z" {...S} /><path d="M6 8.500h18M6 14h18" {...N} /></g>],
  ["Class 2 (UM...", <g key="s"><path d="M1.500 4h27v20h-27z" {...S} /><path d="M1.500 10.500h27" {...N} /></g>],
  ["Package (U...", <path key="s" d="M1.500 4h7v6h20v14h-27z" {...S} />],
  ["Alternative c...", <g key="s"><path d="M1.500 4h27v20h-27z" {...N} /><path d="M1.500 4h10.500q-1 7-6 7H1.500z" {...S} /></g>],
  ["Lifeline (UM...", <g key="s"><path d="M1 0h28v10H1z" fill="#000" stroke="#ccc" /><path d="M15 10v20" stroke="#eee" strokeWidth=".9" strokeDasharray="6 3" /></g>],
  ["Execution oc...", <path key="s" d="M10.500 2h9v25h-9z" {...S} />],
  ["Initial Node (...", <circle key="s" cx="15" cy="14.500" r="12" fill="#000" stroke="#ccc" strokeWidth=".9" />],
  ["Final Node (...", <g key="s"><circle cx="15" cy="14.500" r="12" fill="none" stroke="#ccc" /><circle cx="15" cy="14.500" r="8.500" fill="#000" stroke="#ccc" /></g>],
  ["Return, Flow...", <g key="s"><circle cx="15" cy="14.500" r="12" {...S} /><path d="m6.500 6 17 17M23.500 6l-17 17" {...N} /></g>],
  ["Branching (...", <path key="s" d="m1.500 14.500 13.500-7 13.500 7-13.500 7z" {...S} />],
  ["Round box o...", <rect key="s" x="1.500" y="7.500" width="27" height="14" rx="4" {...S} />],
  ["Use case (U...", <ellipse key="s" cx="15" cy="14.500" rx="13.500" ry="9" {...S} />],
  ["Message fro...", <path key="s" d="M1 3.500h28l-5 11 5 11H1z" {...S} />],
  ["Message to...", <path key="s" d="M7 3.500h22v22H7l-6-11z" {...S} />],
  ["Join/Fork no...", <path key="s" d="M1.500 12.500h27v4h-27z" fill="#111" stroke={EDGE} strokeWidth=".9" />],
  ["Join/Fork no...", <path key="s" d="M13.500 2h3v25h-3z" fill="#111" stroke={EDGE} strokeWidth=".9" />],
  ["Standby node", <path key="s" d="M2.500 2h25L2.500 27h25z" {...S} />],
  ["Actor", <g key="s"><path d="M15 8v10M7.500 12.500h15M8 27l7-8 7 8" fill="none" stroke={EDGE} strokeWidth="3.600" /><path d="M15 8v11M8 12.500h14M8.500 26.500l6.500-7.500 6.500 7.500" fill="none" stroke={PURPLE} strokeWidth="2" /><circle cx="15" cy="5" r="3.500" {...S} /></g>],
  ["Component...", <g key="s"><path d="M7.500 2h19v25h-19z" {...S} /><path d="M3 6.500h8v5H3zM3 17h8v5H3z" {...S} /></g>],
  ["Component...", <g key="s"><path d="M3 6h24v20H3z" {...S} /><path d="M8 2h5v8H8zM18 2h5v8h-5z" {...S} /></g>],
  ["Predefined p...", <g key="s"><path d="M2.500 2h25v25h-25z" {...S} /><path d="M6 2v25M24 2v25" {...N} /></g>],
  ["Internal stor...", <g key="s"><path d="M2.500 2h25v25h-25z" {...S} /><path d="M6 2v25M2.500 5h25" {...N} /></g>],
  ["Node", <g key="s"><path d="m2.500 5 3-3h22.500v22l-3 3H2.500z" {...S} /><path d="M2.500 5H25v22M25 5l3-3" {...N} /></g>],
  ["Multi-proc/d...", <g key="s"><path d="M6 2h21.500v22H6z" {...S} /><path d="M3 4.500h22V27H3z" {...S} /></g>],
  ["Document", <path key="s" d="M2 2h26v23q-6 3-13 0t-13 0z" {...S} />],
  ["Document", <path key="s" d="M5 2h22v25H5Q1 22 5 13T5 2z" {...S} />],
  ["Multi Docum...", <g key="s"><path d="m3 5 4-3h21v21l-3 3z" fill="#e9dff7" /><path d="M2.500 5H25v21.500q-5 1-11-1.500t-11.500 0z" {...S} /></g>],
  ["Multi Docum...", <g key="s"><path d="M7 24 6 27h22V6l-3-3z" fill="#e9dff7" /><path d="M5 2h20v22H5q-3-4 0-11T5 2z" {...S} /></g>],
  ["Database", <g key="s"><path d="M2.500 6v17c0 5 25 5 25 0V6" {...S} /><ellipse cx="15" cy="6" rx="12.500" ry="4" {...S} /></g>],
  ["Direct data", <g key="s"><path d="M24 2H7c-6 0-6 25 0 25h17" {...S} /><ellipse cx="24" cy="14.500" rx="4" ry="12.500" {...S} /></g>],
  ["Note", <path key="s" d="M2.500 2h25v20l-5 5h-20zM27.500 22h-5v5" {...S} />],
  ["Basic shape", <path key="s" d="M3 6 12 2l5 7-2 .5 7 6-2 .500L29 27 13 18l2-1-8-5.500 2-1z" {...S} />],
  ["Basic shape", <g key="s"><path d="M1.500 4h27v22h-27z" {...S} /><path d="M1.500 8h10l3-1V4" {...N} /></g>],
  ["Basic shape", <g key="s"><path d="M1.500 4h14v4h13v18h-27z" {...S} /><path d="M1.500 8h14" {...N} /></g>],
];
const others: [string, React.ReactNode][] = [
  ["Triangle", <path key="s" d="m15 2 12.500 25h-25z" {...S} />],
  ["Diamond, De...", <path key="s" d="m1.500 14.500 13.500-7 13.500 7-13.500 7z" {...S} />],
  ["Fill Arc from...", <path key="s" d="M15 14.500V2A12.700 12.700 0 1 1 5 8z" {...S} />],
  ["5-sided poly...", <polygon key="s" points={poly(5, 15, 15.5, 13.5)} {...S} />],
  ["6-sided poly...", <polygon key="s" points={poly(6, 15, 14.5, 13.5, 0)} {...S} />],
  ["7-sided poly...", <polygon key="s" points={poly(7, 15, 15, 13)} {...S} />],
  ["8-sided poly...", <polygon key="s" points={poly(8, 15, 14.5, 13.2, 22.5)} {...S} />],
  ["9-sided poly...", <polygon key="s" points={poly(9, 15, 14.5, 12.8)} {...S} />],
  ["", <polygon key="s" points={poly(10, 15, 14.5, 12.8)} {...S} />],
  ["", <polygon key="s" points={poly(11, 15, 14.5, 12.6)} {...S} />],
  ["", <polygon key="s" points={poly(12, 15, 14.5, 12.8)} {...S} />],
  ["", <polygon key="s" points="15,2 17.500,17 29,26 15,22 1,26 12.500,17" {...S} />],
];
const Tiles = ({ items, h }: { items: [string, React.ReactNode][]; h: number }) => (
  <TileGrid $h={h}>
    {items.map(([n, g], i) => (
      <Tile key={i} aria-label={n || "Shape " + (i + 1)}><svg width="30" height="29" viewBox="0 0 30 29" overflow="visible">{g}</svg>{n}</Tile>
    ))}
  </TileGrid>
);

const connectors = ["M1 7h3V3h4", "M1.500 7.500 8 2", "M1 7.500h3q3 0 3.500-4", "M1 6h4V3h4", "M2 2h4v3H3v2h4"];
const AlignIcon = ({ v, n }: { v?: boolean; n: number }) => (
  <svg width="10" height="10" viewBox="0 0 10 10" fill="#8d8d8d">
    {steps(n).map((i) => v
      ? <rect key={i} x="3" y={n === 3 ? 1 + i * 3 : 1 + i * 5} width="4" height={n === 3 ? 2 : 3.4} />
      : <rect key={i} x={n === 3 ? 0.5 + i * 3.4 : 1 + i * 4.6} y="3" width={n === 3 ? 2.2 : 3.4} height="4" />)}
    {n === 2 && <path d={v ? "M0 5h2v.6H0z" : "M4.800 1h.6v8h-.6z"} fill="#a35555" />}
  </svg>
);

const fields: [string, string][] = [["x", "y"], ["x2", "y2"], ["cX", "cY"], ["w", "h"]];

export default function App() {
  return (
    <>
      <GlobalStyle />
      <Desktop>
        <AppWindow>
          <TitleBar>
            <Lights><Light $c="#ec6a5e" /><Light $c="#f4bf4f" /><Light $c="#61c554" /></Lights>
            <FileName>3.umdx</FileName>
            <IconGroup>
              <IconButton aria-label="Copy"><svg width="12" height="13" viewBox="0 0 12 13"><path d="M0 3h5v9H0z" fill="#777" /><path d="M4.500 1h4L11 3.500V10H4.500z" fill="#929292" stroke="#333" strokeWidth=".6" /></svg></IconButton>
              <IconButton aria-label="Paste"><svg width="12" height="14" viewBox="0 0 12 14"><path d="M0 1h9v10H0z" fill="#b9b9b9" /><path d="M3 2.500h8v8L8.500 13H3z" fill="#f7f7f7" /></svg></IconButton>
              <IconButton aria-label="Cut"><svg width="13" height="12" viewBox="0 0 13 12"><path d="m3 3.500 9 5M3 8.500l9-5M8 6h5" fill="none" stroke="#777" strokeWidth=".9" /><circle cx="2" cy="3" r="1.300" fill="none" stroke="#777" /><circle cx="2" cy="9" r="1.300" fill="none" stroke="#777" /></svg></IconButton>
              <IconButton aria-label="Delete"><svg width="10" height="12" viewBox="0 0 10 12"><path d="M2 1c2 2 3 7 5 10M9 1C6 4 3 7 1 11" fill="none" stroke="#963632" strokeWidth="1.500" /></svg></IconButton>
              <IconButton aria-label="Pen"><svg width="13" height="13" viewBox="0 0 13 13"><path d="M5 9c-.5-3 1-5.500 4-6l1.500 1.500C10.500 7 8.500 9 5 9zM9.500 2.500 11 1l1.500 1.500L11 4" fill="none" stroke="#9c9c9c" strokeWidth=".9" /><circle cx="7.200" cy="6.500" r=".9" fill="#bbb" /><path d="M.5 11.500h1.500M3.500 11.500h1" stroke="#9c9c9c" /></svg></IconButton>
              <IconButton aria-label="Info"><svg width="14" height="14" viewBox="0 0 14 14"><circle cx="7" cy="7" r="6.600" fill="#2f4283" /><circle cx="7.400" cy="3.700" r="1" fill="#9aa8d8" /><path d="M6 6h1.600l-.8 4.500h1.400" fill="none" stroke="#9aa8d8" strokeWidth="1.100" /></svg></IconButton>
            </IconGroup>
            <IconGroup $ml={26}>
              <SegButton $on aria-label="Select"><Cursor /></SegButton>
              <SegButton aria-label="Shape"><svg width="9" height="6"><path d="M0 0h9v6H0z" fill={PURPLE} /></svg></SegButton>
            </IconGroup>
            <IconGroup $ml={9}>
              {connectors.map((d) => <SegButton key={d} aria-label="Connector"><Connector d={d} /></SegButton>)}
              <SegButton aria-label="Straight pen"><Connector blue d="m2 7 5-5" /></SegButton>
              <SegButton aria-label="Curve pen"><svg width="10" height="10" viewBox="0 0 10 10"><path d="M2 2v5l4 1 3-4-2-2" fill="#2f8ce6" /><path d="m4 4 4-3 1 2-3 3z" fill="#d6dfe6" /></svg></SegButton>
            </IconGroup>
            <IconGroup $ml={20}>
              <IconButton $w={21} aria-label="Emoji"><Smiley s={16} /></IconButton>
              <IconButton $w={21} aria-label="Clip art"><Flags s={13} /></IconButton>
              <IconButton $w={21} aria-label="Shapes"><Shapes s={13} /></IconButton>
            </IconGroup>
            <IconGroup $ml={1}>
              <IconButton $w={22} aria-label="Left panel"><WindowIcon side="l" /></IconButton>
              <IconButton $w={22} aria-label="Bottom panel"><WindowIcon side="b" /></IconButton>
              <IconButton $w={22} aria-label="Right panel"><WindowIcon side="r" /></IconButton>
            </IconGroup>
          </TitleBar>

          <Workspace>
            <SidePanel>
              <Head>Thumbnail</Head>
              <Body $h={108} $pad="0">
                <ThumbFrame>
                  <svg viewBox="150 74 545 458" preserveAspectRatio="none" role="img" aria-label="Document thumbnail">
                    <g opacity=".65"><Diagram text={false} /></g>
                    <circle cx="412" cy="294" r="22" fill="none" stroke="#4a7ae0" strokeWidth="6" />
                  </svg>
                </ThumbFrame>
              </Body>
              <Head>Fill</Head>
              <Body $h={66} $pad="2px 0 0 3px">
                <Row $h={13} $gap={2}><Well $w={25} $fill="#fff" aria-label="Fill color" /><Wheel aria-label="Pick fill color" /><ChoiceLabel><Radio name="fill" defaultChecked /> Fill color</ChoiceLabel></Row>
                <Row $h={13} $pl={39}><ChoiceLabel><Radio name="fill" /> No Fill</ChoiceLabel></Row>
                <Row $h={13} $gap={3}><Well $w={36} $fill="linear-gradient(to right, #e8e8e8, #151515)" aria-label="Gradient" /><ChoiceLabel><Radio name="fill" /> Gradient</ChoiceLabel></Row>
                <Row $h={13} $gap={3}>
                  <Combo $w={36} $tone="linear-gradient(120deg, #888, #ddd 40%, #aaa 60%, #ddd)"><select aria-label="Pattern style"><option> </option></select><UpDown /></Combo>
                  <ChoiceLabel><Radio name="fill" /> Pattern</ChoiceLabel>
                  <IconGroup $ml={8}><Combo $w={23}><input aria-label="Pattern scale" defaultValue="1" /><DownBtn label="Scale list" /></Combo></IconGroup>
                </Row>
                <Row $h={10} $gap={4}><FieldName $w={34} htmlFor="opq">Opaque</FieldName><Slider id="opq" $w={59} $v={92} defaultValue="100" /></Row>
              </Body>
              <Head>Stroke</Head>
              <Body $h={67} $pad="1px 0 0">
                <Row $h={12} $gap={2}>
                  <FieldName $w={30} htmlFor="line">Line</FieldName><Check id="line" defaultChecked /><Well $w={24} $fill="#000" aria-label="Stroke color" /><Wheel aria-label="Pick stroke color" />
                  <IconGroup $ml={1}><SmallButton $w={12} $h={11} $on aria-label="Inner">|</SmallButton><SmallButton $w={12} $h={11} aria-label="Outer">|</SmallButton></IconGroup>
                </Row>
                <Row><FieldName $w={38} $small htmlFor="sz">Size</FieldName><Combo $w={32}><input id="sz" defaultValue="1" /><DownBtn label="Size list" /></Combo><SmallButton $w={15} aria-label="Step size"><StepPair /></SmallButton></Row>
                <Row><FieldName $w={38} $small htmlFor="dash">Dash</FieldName><Combo $w={60} $tone="linear-gradient(#555 3px, #eee 3px 5px, #555 5px)"><select id="dash"><option> </option></select><UpDown /></Combo></Row>
                <Row><FieldName $w={38} $small htmlFor="arr">Arrow</FieldName><Combo $w={60} $tone="#555"><select id="arr"><option>None</option></select><UpDown /></Combo></Row>
                <Row $pl={41}><Combo $w={32}><input aria-label="Arrow size" defaultValue="13" /><DownBtn label="Arrow size list" /></Combo><SmallButton $w={25}>Swap</SmallButton></Row>
                <Row $pl={41}><Combo $w={60} $tone="#555"><svg width="24" height="6"><path d="M2 3h18" stroke="#3f9a46" /><path d="m19 1 4 2-4 2z" fill="#3f9a46" /></svg><select aria-label="Arrow style"><option>Arrow</option></select><UpDown /></Combo></Row>
              </Body>
              <Head>Modify</Head>
              <Body $h={98} $pad="0">
                <ToolGrid>{modifyTools.map(([n, g], i) => <ToolCell key={n} aria-label={n} $on={i === 0} $bare={i === 22}>{g}</ToolCell>)}</ToolGrid>
              </Body>
              <Head>Join &amp; End line cap</Head>
              <Body $h={73} $pad="0">
                <JoinRow>
                  <svg width="21" height="17" viewBox="0 0 21 17"><path d="M2 11 10.500 3.500 19 11" fill="none" stroke="#5c5c5c" strokeWidth="5" /><path d="m2 16 8.500-7.500L19 16" fill="none" stroke="#484848" strokeWidth="3" /></svg>
                  <ChoiceStack>{["Join: Miter", "Join: Round", "Join: Bevel"].map((t, i) => <ChoiceLabel key={t} $dim><Radio name="join" $dim defaultChecked={i === 0} />{t}</ChoiceLabel>)}</ChoiceStack>
                </JoinRow>
                <JoinRow>
                  <svg width="21" height="7" viewBox="0 0 21 7"><path d="M0 0h21v7H0z" fill="#515151" /><path d="M0 3h21v1H0z" fill="#777" /></svg>
                  <ChoiceStack>{["Butt end line cap", "Rounded end line cap", "Square end line cap"].map((t, i) => <ChoiceLabel key={t} $dim><Radio name="cap" $dim defaultChecked={i === 0} />{t}</ChoiceLabel>)}</ChoiceStack>
                </JoinRow>
                <Row $h={14} $pl={40}><ChoiceLabel $dim><DimCheck />Primitivelines</ChoiceLabel></Row>
              </Body>
              <Head>Shadow</Head>
              <Body $h={60} $pad="0">
                <Row $h={10}><ChoiceLabel><Check /> Enable (Shadow)</ChoiceLabel></Row>
                <Row $h={13} $gap={2}><FieldName $w={38} htmlFor="shc">Color</FieldName><Well id="shc" $w={40} $fill="#000" /><Wheel aria-label="Pick shadow color" /></Row>
                <Row $h={11} $gap={3}><FieldName $w={38} htmlFor="ang">Angle</FieldName><Combo $w={38} $center><input id="ang" defaultValue="315" /></Combo><IconGroup $ml={1}><Knob /></IconGroup></Row>
                <Row $h={10} $gap={3}><FieldName $w={38} htmlFor="dst">Distance</FieldName><Slider id="dst" $w={50} $v={15} defaultValue="8" /></Row>
                <Row $h={8} $gap={3}><FieldName $w={38} htmlFor="blr">Blur</FieldName><Slider id="blr" $w={50} $v={30} defaultValue="27" /></Row>
              </Body>
            </SidePanel>

            <DocColumn>
              <TabBar>
                <Tab>Canvas 1</Tab>
                <TabTools>
                  <button aria-label="Close canvas"><svg width="8" height="8" viewBox="0 0 8 8"><circle cx="4" cy="4" r="3" fill="none" stroke="#bbb" strokeWidth=".8" /><path d="M2.500 4h3" stroke="#bbb" /></svg></button>
                  <button aria-label="Add canvas"><svg width="8" height="8" viewBox="0 0 8 8"><path d="M4 1.500v5M1.500 4h5" stroke="#ccc" strokeWidth=".8" /></svg></button>
                </TabTools>
              </TabBar>
              <DocGrid>
                <Ruler $span><TopRuler /></Ruler>
                <Ruler><SideRuler /></Ruler>
                <CanvasArea><CanvasDrawing /></CanvasArea>
                <Track $side><i /></Track>
                <Ruler />
                <Track><i /></Track>
                <Ruler />
              </DocGrid>
            </DocColumn>

            <Inspector>
              <Head>All layers</Head>
              <Row $h={17} $pl={12} $gap={18}>
                <button aria-label="Add layer"><svg width="6" height="6"><path d="M3 0v6M0 3h6" stroke="#bbb" strokeWidth="1.400" /></svg></button>
                <button aria-label="Delete layer"><svg width="6" height="7"><path d="m1 1 4 5M5 1 1 6" stroke="#963632" /></svg></button>
              </Row>
              <LayerList><LayerRow>Layer... <Check defaultChecked aria-label="Layer visible" /><Swatch /></LayerRow></LayerList>
              <Head>Font &amp; Text</Head>
              <Body $h={96}>
                <Row $h={13} $gap={2}><FieldName $w={24} htmlFor="txc">Text</FieldName><Well id="txc" $w={28} $fill="#000" /><Wheel aria-label="Pick text color" /><Check defaultChecked aria-label="Use text color" /></Row>
                <Row $h={11} $gap={3}><FieldName $w={24} $small htmlFor="fs">Size</FieldName><Combo $w={23}><input id="fs" defaultValue="12" /><DownBtn label="Font size list" /></Combo><SmallButton $w={9} aria-label="Step font size"><StepPair /></SmallButton><SmallButton $w={9}><b>B</b></SmallButton></Row>
                <Row $h={10} $gap={3}><FieldName $w={24} $small htmlFor="fn">Font</FieldName><Combo $w={47} $tone="#505050"><select id="fn"><option>Helvetica</option></select></Combo></Row>
                <Row $h={37} $gap={3}><TextNote htmlFor="tx">Text (Press alt + return to enter a carriage return)</TextNote><TextBox id="tx" /></Row>
                <Row $h={11} $gap={3}><FieldName as="span" $w={24} $small>Align</FieldName>
                  <SmallButton $w={20} aria-label="Align left"><svg width="8" height="6"><path d="M0 1h8M0 3h5M0 5h7" stroke="#bbb" strokeWidth=".9" /></svg></SmallButton>
                  <SmallButton $w={21} $on aria-label="Align center"><svg width="8" height="6"><path d="M0 1h8M1.500 3h5M0 5h8" stroke="#eee" strokeWidth=".9" /></svg></SmallButton>
                </Row>
                <Row $h={10} $gap={2} $pl={2}>
                  <SmallButton $w={12} aria-label="Top"><svg width="8" height="6"><path d="M0 1h8" stroke="#bbb" /></svg></SmallButton>
                  <SmallButton $w={13} $on aria-label="Middle"><svg width="8" height="6"><path d="M0 3h8" stroke="#eee" strokeWidth="1.500" /></svg></SmallButton>
                  <SmallButton $w={12} aria-label="Bottom"><svg width="8" height="6"><path d="M0 5h8" stroke="#bbb" /></svg></SmallButton>
                  <SmallButton $w={12} aria-label="Below"><svg width="8" height="6"><path d="M0 1h8" stroke="#777" /><path d="M2 3h4v3H2z" fill="#2450d0" /></svg></SmallButton>
                  <SmallButton $w={12} aria-label="Above"><svg width="8" height="6"><path d="M0 5h8" stroke="#777" /><path d="M2 0h4v3H2z" fill="#2450d0" /></svg></SmallButton>
                </Row>
              </Body>
              <Head>Size &amp; Position</Head>
              <Body $h={82} $pad="2px 0 0 2px">
                {fields.map(([a, b]) => (
                  <Row key={a} $h={9} $gap={2}><FieldName $w={10} $small $left htmlFor={"f" + a}>{a}</FieldName><NumField id={"f" + a} /><FieldName $w={10} $small $left htmlFor={"f" + b}>{b}</FieldName><NumField id={"f" + b} /></Row>
                ))}
                <Row $h={8} $gap={2}><FieldName $w={10} $small $left htmlFor="rt">ratio</FieldName><NumField id="rt" /><FieldName $w={10} $small $left htmlFor="kp">w/h</FieldName><ChoiceLabel><Check id="kp" defaultChecked />Keep</ChoiceLabel></Row>
                <Row $h={9} $gap={2}><FieldName $w={10} $small $left htmlFor="an">ang</FieldName><NumField id="an" /><Spacer><DownBtn label="Angle list" /></Spacer><Knob /><ChoiceLabel $small as="span">Angl</ChoiceLabel></Row>
                {["len", "len1", "len2"].map((t) => (
                  <Row key={t} $h={9} $gap={2}><FieldName $w={10} $small $left htmlFor={t}>{t}</FieldName><NumField id={t} /><Spacer>{t === "len1" && <QMark s={8} />}</Spacer><ChoiceLabel $small as="span">(Length: F</ChoiceLabel></Row>
                ))}
              </Body>
              <Head>Add Shape</Head>
              <ShapeGrid>
                {addShapes.map(([n, g]) => <button key={n} aria-label={n}>{g ? <svg width="16" height="16">{g}</svg> : "abc"}</button>)}
              </ShapeGrid>
            </Inspector>
          </Workspace>

          <Footer>
            <FooterLeft>
              <ToolStrip>
                {[0, 1, 2].map((i) => <StripButton key={i} aria-label="Align vertical"><AlignIcon v n={2} /></StripButton>)}
                {[0, 1, 2].map((i) => <StripButton key={i} aria-label="Align horizontal"><AlignIcon n={2} /></StripButton>)}
                <StripButton $w={16} aria-label="Distribute horizontal"><AlignIcon n={3} /></StripButton>
                <StripButton aria-label="Distribute vertical"><AlignIcon v n={3} /></StripButton>
                <StripButton $on aria-label="Ruler"><svg width="12" height="12" viewBox="0 0 12 12"><path d="M1 2v9h9z" fill="#4e7aa0" opacity=".6" /><path d="m1 1 10 10" stroke="#dfe7ee" /></svg></StripButton>
                <StripButton $w={15} aria-label="Grid"><svg width="11" height="11" viewBox="0 0 11 11"><path d="M0 0h11v11H0z" fill="#14355f" /><path d="M0 2h11M0 5.500h11M0 9h11M2 0v11M5.500 0v11M9 0v11" stroke="#2a74d6" strokeWidth=".8" /></svg></StripButton>
                <StripButton aria-label="Snap to grid"><svg width="11" height="11" viewBox="0 0 11 11"><path d="M0 0h11v11H0z" fill="#14355f" /><path d="M0 2h11M2 0v11M9 0v11" stroke="#2a74d6" strokeWidth=".8" /><path d="M10 4.500H7a2 2 0 0 0 0 4h3" fill="none" stroke="#050505" strokeWidth="2" /></svg></StripButton>
                <StripButton $on aria-label="Snap"><svg width="11" height="11" viewBox="0 0 11 11"><path d="M9.500 2.500H6a3 3 0 0 0 0 6h3.500" fill="none" stroke="#080808" strokeWidth="2.400" /><path d="M8.500 1.300H10v2.400H8.500zM8.500 7.300H10v2.400H8.500z" fill="#eee" /></svg></StripButton>
                {[0, 1].map((i) => <StripButton key={i} aria-label="Lock"><svg width="8" height="9" viewBox="0 0 8 9"><path d="M1.500 4h5v4h-5zM2.500 4V2a1.500 1.500 0 0 1 3 0v2" fill="none" stroke="#4c4c4c" /></svg></StripButton>)}
                <StripButton aria-label="Group" $w={16} /><StripButton aria-label="Ungroup" $w={16} />
                {[0, 1].map((i) => <StripButton key={i} aria-label={i ? "Send back" : "Bring front"} $w={15}><svg width="6" height="9" viewBox="0 0 6 9"><path d={i ? "M3 1v6M1 5l2 2.500L5 5" : "M3 8V2M1 4l2-2.500L5 4"} fill="none" stroke="#666" /></svg></StripButton>)}
                <StripButton aria-label="Emoji"><Smiley s={11} /></StripButton>
                <StripButton aria-label="Clip art"><Flags s={10} /></StripButton>
                <StripButton $on aria-label="Shapes"><Shapes s={10} /></StripButton>
                <StripButton $w={16} aria-label="Cloud"><svg width="10" height="10" viewBox="0 0 10 10"><rect width="10" height="10" rx="1.500" fill="#2a74e4" /><path d="M2.500 7a1.500 1.500 0 0 1 .4-2.800 2.200 2.200 0 0 1 4.200.3A1.300 1.300 0 0 1 7.500 7z" fill="#fff" /></svg></StripButton>
                <StripButton aria-label="Order"><svg width="10" height="10" viewBox="0 0 10 10"><path d="M1 1h8v2H1zM3 4h6v1.500H3zM1 6.500h7v2H1z" fill="#bbb" /></svg></StripButton>
                <StripButton $on $w={15} aria-label="Pointer"><Cursor s={10} c="#ddd" /></StripButton>
                <Row $h={14} $pl={2}><ChoiceLabel $small><Check defaultChecked /> Allow Connections</ChoiceLabel></Row>
              </ToolStrip>
              <StatusLine>{"You can hold SPACE then move mouse to maneuver around document;  Click top-right [ ? ] button for help"}</StatusLine>
            </FooterLeft>
            <FooterRight>
              <span>18.55cm x -2.15cm</span>
              <Row $gap={4}><label htmlFor="zoom">Zoom</label><Slider id="zoom" $w={42} $v={0} $k={6} defaultValue="4" /><Combo $w={30}><input aria-label="Zoom percent" defaultValue="72%" /><DownBtn label="Zoom list" /></Combo><QMark s={8} /></Row>
            </FooterRight>
          </Footer>
        </AppWindow>

        <Palette>
          <FilterBar>
            <FilterField><label htmlFor="type">Type:</label><Picker><select id="type"><option>All</option></select><UpDown plain /></Picker></FilterField>
            <FilterField $grow><label htmlFor="filter">Filter:</label>
              <Search><svg width="7" height="7" viewBox="0 0 7 7"><circle cx="3" cy="3" r="2.200" fill="none" stroke="#ccc" strokeWidth=".9" /><path d="m4.700 4.700 2 2" stroke="#ccc" strokeWidth=".9" /></svg><input id="filter" placeholder="Search by Name" /></Search>
            </FilterField>
          </FilterBar>
          <ScrollArea>
            <Groups>
              <GroupHead><Chevron />UML, Flow ( 34 )</GroupHead>
              <Tiles items={flow} h={362} />
              <GroupHead><Chevron />Others ( 87 )</GroupHead>
              <Tiles items={others} h={121} />
            </Groups>
            <Thumb />
          </ScrollArea>
          <PaletteFoot>
            <PushButton aria-label="Expand"><svg width="7" height="7" viewBox="0 0 7 7"><path d="m1 1 2 2M1 3l2-2M4 4l2 2M6 4 4 6" stroke="#ccc" strokeWidth=".8" /></svg></PushButton>
            <PushButton>Reset</PushButton>
            <FootCell><PushButton $w={84}>Make Custom Shape</PushButton></FootCell>
            <span />
            <PushButton>Import</PushButton>
            <FootCell><ChoiceLabel><GreyCheck defaultChecked /> Show title</ChoiceLabel></FootCell>
            <FootLine>Add new object by click on the icon then drag to the canvas</FootLine>
          </PaletteFoot>
        </Palette>
      </Desktop>
    </>
  );
}
